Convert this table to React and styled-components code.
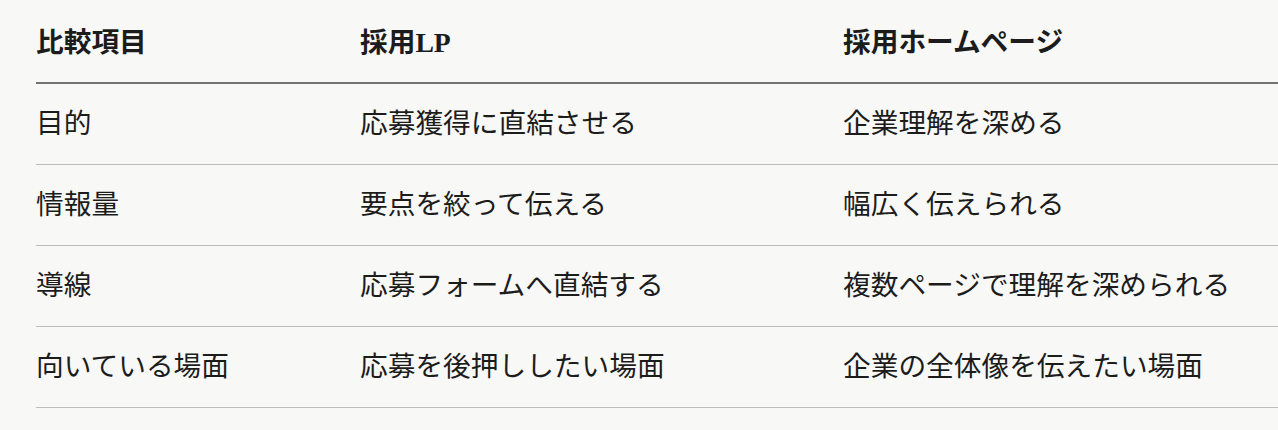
import React from 'react';
import styled, { createGlobalStyle } from 'styled-components';

const GlobalStyle = createGlobalStyle`
  html, body {
    margin: 0;
    padding: 0;
    background: #f8f8f6;
  }
  body {
    font-family: "Liberation Serif", "Noto Sans CJK JP", serif;
    color: #1c1c1c;
  }
`;

const Wrapper = styled.section`
  padding: 2px 0 0 36px;
  overflow: hidden;
`;

const Table = styled.table`
  width: 100%;
  border-collapse: collapse;
  table-layout: fixed;
  font-size: 27.7px;
  line-height: 40px;
`;

const HeadCell = styled.th`
  text-align: left;
  font-weight: 700;
  padding: 21px 0 19px;
  border-bottom: 2px solid #737373;
  white-space: nowrap;
`;

const Cell = styled.td`
  padding: 20px 0;
  border-bottom: 1px solid #bdbdbb;
  white-space: nowrap;
`;

const rows = [
  ['目的', '応募獲得に直結させる', '企業理解を深める'],
  ['情報量', '要点を絞って伝える', '幅広く伝えられる'],
  ['導線', '応募フォームへ直結する', '複数ページで理解を深められる'],
  ['向いている場面', '応募を後押ししたい場面', '企業の全体像を伝えたい場面'],
];

export default function App() {
  return (
    <>
      <GlobalStyle />
      <Wrapper>
        <Table>
          <colgroup>
            <col style={{ width: 324 }} />
            <col style={{ width: 483 }} />
            <col />
          </colgroup>
          <thead>
            <tr>
              <HeadCell>比較項目</HeadCell>
              <HeadCell>採用LP</HeadCell>
              <HeadCell>採用ホームページ</HeadCell>
            </tr>
          </thead>
          <tbody>
            {rows.map((row) => (
              <tr key={row[0]}>
                {row.map((text) => (
                  <Cell key={text}>{text}</Cell>
                ))}
              </tr>
            ))}
          </tbody>
        </Table>
      </Wrapper>
    </>
  );
}
